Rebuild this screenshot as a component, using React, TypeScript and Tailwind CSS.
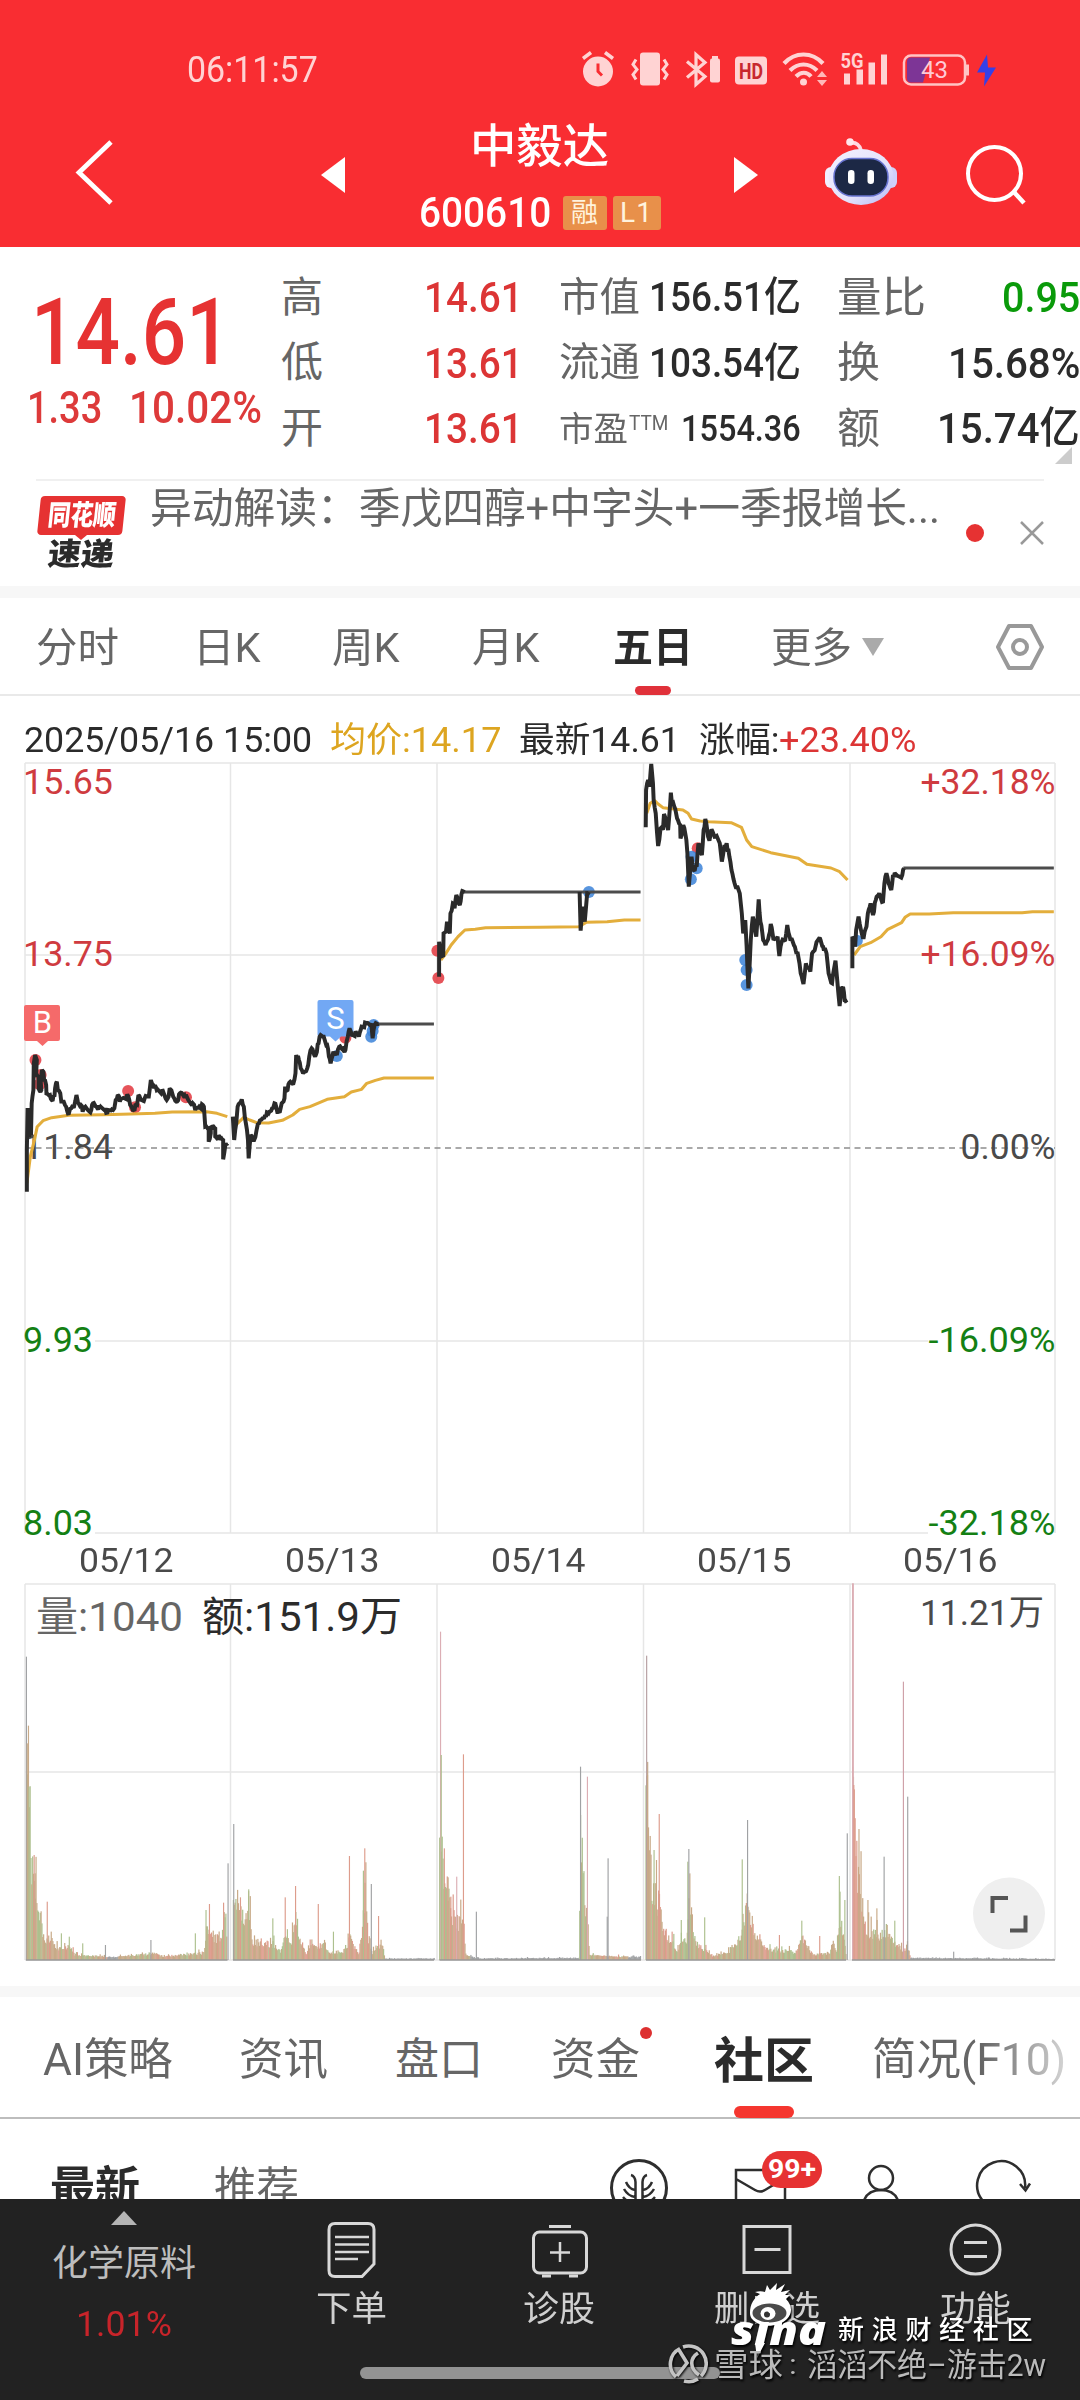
import React, { useLayoutEffect, useRef } from "react";

/* Text that is condensed or stretched to fill the width of its box. */
function Fit({ className = "", children }: { className?: string; children: React.ReactNode }) {
  const box = useRef<HTMLSpanElement>(null);
  const inner = useRef<HTMLSpanElement>(null);
  useLayoutEffect(() => {
    const fit = () => {
      if (!box.current || !inner.current) return;
      const natural = inner.current.offsetWidth;
      if (natural) inner.current.style.transform = `scaleX(${box.current.clientWidth / natural})`;
    };
    fit();
    document.fonts?.ready.then(fit);
  }, []);
  return (
    <span ref={box} className={"block shrink-0 whitespace-nowrap leading-none " + className}>
      <span ref={inner} className="inline-block origin-left">{children}</span>
    </span>
  );
}

/* ---------- header ---------- */

function StatusIcons() {
  return (
    <svg className="ml-[263px] h-[40px] w-[420px]" viewBox="582 48.500 420 40" fill="none">
      <g stroke="#ffd3d3" fill="#ffd3d3">
        <circle cx="599" cy="70" r="15" stroke="none" />
        <path d="M584 57l8-6M614 57l-8-6" strokeWidth="3.500" />
        <path d="M599 62v8l4 4" stroke="#f92d32" strokeWidth="3" fill="none" />
        <rect x="641" y="51" width="20" height="33" rx="3" stroke="none" />
        <path d="M637 58l-3 5 4 5-4 5 3 5M665 58l3 5-4 5 4 5-3 5" strokeWidth="3" fill="none" />
        <path d="M688 60l18 15-9 8V53l9 8-18 15" strokeWidth="3.200" fill="none" />
        <rect x="711" y="57" width="10" height="24" rx="2" stroke="none" />
        <rect x="713" y="54.500" width="6" height="3" stroke="none" />
        <rect x="736" y="55" width="32" height="28" rx="4" stroke="none" />
      </g>
      <text x="740" y="77.500" fontSize="22" fontWeight="700" fill="#c8282e" textLength="24" lengthAdjust="spacingAndGlyphs" fontFamily="Roboto">HD</text>
      <g stroke="#ffd3d3" strokeWidth="4.200" fill="none">
        <path d="M785 62c11-12 28-12 39 0M791 69c8-8 19-8 27 0M797 75c5-5 11-5 15 0" />
      </g>
      <circle cx="804.500" cy="80.500" r="3.500" fill="#ffd3d3" />
      <path d="M818 75.500l5-6 5 6zM818 78.500l5 6 5-6z" fill="#ffb9b9" />
      <text x="841.500" y="66.500" fontSize="20" fontWeight="700" fill="#ffd3d3" textLength="23" lengthAdjust="spacingAndGlyphs" fontFamily="Roboto">5G</text>
      <path d="M845 72h6v11h-6zM857.500 68h6.500v15h-6.500zM869.500 61h6.500v22h-6.500zM882 53h6v30h-6z" fill="#ffd3d3" />
      <path d="M912 56h19l-7 25h-12q-4 0-4-4V60q0-4 4-4z" fill="#7d3596" />
      <rect x="905" y="54" width="61" height="29" rx="7" stroke="#ffc4c4" strokeWidth="2.500" />
      <path d="M968.500 63v11" stroke="#ffc4c4" strokeWidth="3" />
      <text x="922" y="76.500" fontSize="23" fill="#ffc9d6" textLength="27" lengthAdjust="spacingAndGlyphs" fontFamily="Roboto">43</text>
      <path d="M988 53l-10 18h8l-1 14 12-19h-8z" fill="#3440e8" />
    </svg>
  );
}

function Robot() {
  return (
    <svg className="ml-[66px] h-[72px] w-[72px]" viewBox="825 135 72 72">
      <defs>
        <linearGradient id="shell" x1="0" y1="0" x2="1" y2="1">
          <stop offset="0" stopColor="#f3f0ff" />
          <stop offset=".6" stopColor="#e4e2fb" />
          <stop offset="1" stopColor="#b3b8f5" />
        </linearGradient>
      </defs>
      <path d="M849 143q9-2 12 7" fill="none" stroke="#ffd9e2" strokeWidth="3.500" />
      <circle cx="850" cy="142" r="3.800" fill="#ffe7ec" />
      <rect x="825" y="167" width="12" height="21" rx="6" fill="#f1efff" />
      <rect x="885" y="167" width="12" height="21" rx="6" fill="#cfd0fa" />
      <ellipse cx="861" cy="177" rx="32.500" ry="28" fill="url(#shell)" />
      <rect x="834" y="158.500" width="54" height="37.500" rx="18" fill="#1c2845" stroke="#6773d0" strokeWidth="1.500" />
      <rect x="848" y="170" width="6.500" height="14" rx="3.200" fill="#fff" />
      <rect x="867.500" y="170" width="6.500" height="14" rx="3.200" fill="#fff" />
    </svg>
  );
}

function Header() {
  return (
    <header className="h-[247px] bg-[#f92d32] text-white">
      <div className="flex h-[110px] items-center pt-[29px] pl-[187px]">
        <Fit className="w-[131px] text-[37px] text-[#ffd3d3]">06:11:57</Fit>
        <StatusIcons />
      </div>
      <div className="flex h-[137px] items-start">
        <svg className="mt-[30px] ml-[74px] h-[68px] w-[42px]" viewBox="74 141 42 68" fill="none" stroke="#fff" strokeWidth="4.800">
          <path d="M111 143L79 173.500 111 204" />
        </svg>
        <svg className="mt-[47px] ml-[205px] h-[36px] w-[24px]" viewBox="0 0 24 36"><path d="M24 0v36L0 18z" fill="#fff" /></svg>
        <div className="ml-[74px] flex w-[241px] flex-col items-center">
          <Fit className="mt-[13px] w-[139px] text-[46px] font-medium">中毅达</Fit>
          <div className="mt-[23px] flex items-center">
            <Fit className="w-[132px] text-[42px] font-medium">600610</Fit>
            <span className="ml-[12px] flex h-[34px] w-[44px] items-center justify-center rounded-[3px] bg-[#e8904a] text-[27px] leading-none text-[#fff3dd]">融</span>
            <span className="ml-[6px] flex h-[34px] w-[48px] items-center justify-center rounded-[3px] bg-[#e8904a] text-[28px] leading-none tracking-[1px] text-[#fff3dd]">L1</span>
          </div>
        </div>
        <svg className="mt-[47px] ml-[74px] h-[36px] w-[24px]" viewBox="0 0 24 36"><path d="M0 0v36l24-18z" fill="#fff" /></svg>
        <div className="mt-[25px] ml-px"><Robot /></div>
        <svg className="mt-[33px] ml-[67px] h-[64px] w-[64px]" viewBox="964 143 64 64" fill="none" stroke="#fff" strokeWidth="4">
          <circle cx="994.500" cy="173.500" r="26.500" />
          <path d="M1013 191l11 12" strokeWidth="4.500" />
        </svg>
      </div>
    </header>
  );
}

/* ---------- quote ---------- */

const label = "text-[42px] text-[#666]";
const dark = "text-[43px] font-medium text-[#2b2b2b]";

function Quote() {
  return (
    <section className="relative flex h-[232px]">
      <div className="w-[281px]">
        <Fit className="mt-[40px] ml-[31px] w-[200px] text-[92px] font-medium text-[#e63232]">14.61</Fit>
        <div className="mt-[6px] flex">
          <Fit className="ml-[27px] w-[75px] text-[45px] font-medium text-[#dd3a3a]">1.33</Fit>
          <Fit className="ml-[27px] w-[133px] text-[45px] font-medium text-[#dd3a3a]">10.02%</Fit>
        </div>
      </div>
      <div className="w-[278px] pt-[18px]">
        {[["高", "14.61"], ["低", "13.61"], ["开", "13.61"]].map(([k, v]) => (
          <div key={k} className="flex h-[65.5px] items-center">
            <Fit className={"w-[42px] " + label}>{k}</Fit>
            <Fit className="ml-[101px] w-[99px] text-[43px] font-medium text-[#dc3535]">{v}</Fit>
          </div>
        ))}
      </div>
      <div className="w-[278px] pt-[18px]">
        {[["市值", "156.51亿"], ["流通", "103.54亿"]].map(([k, v]) => (
          <div key={k} className="flex h-[65.5px] items-center">
            <Fit className="w-[81px] text-[40px] text-[#666]">{k}</Fit>
            <Fit className="ml-[9px] w-[152px] text-[41px] font-medium text-[#2b2b2b]">{v}</Fit>
          </div>
        ))}
        <div className="flex h-[65.5px] items-center">
          <Fit className="w-[69px] text-[34px] text-[#666]">市盈</Fit>
          <Fit className="mb-[12px] ml-[1px] w-[39px] text-[20px] text-[#666]">TTM</Fit>
          <Fit className="ml-[13px] w-[120px] text-[36px] font-medium text-[#2b2b2b]">1554.36</Fit>
        </div>
      </div>
      <div className="w-[243px] pt-[18px]">
        <div className="flex h-[65.5px] items-center justify-between">
          <Fit className={"w-[89px] " + label}>量比</Fit>
          <Fit className="w-[78px] text-[43px] font-medium text-[#0a9a0a]">0.95</Fit>
        </div>
        <div className="flex h-[65.5px] items-center justify-between">
          <Fit className={"w-[43px] " + label}>换</Fit>
          <Fit className={"w-[132px] " + dark}>15.68%</Fit>
        </div>
        <div className="flex h-[65.5px] items-center justify-between">
          <Fit className={"w-[43px] " + label}>额</Fit>
          <Fit className={"w-[143px] " + dark}>15.74亿</Fit>
        </div>
      </div>
      <svg className="absolute top-[200px] left-[1055px] h-[17px] w-[17px]" viewBox="0 0 17 17"><path d="M17 0v17H0z" fill="#ccc" /></svg>
    </section>
  );
}

function News() {
  return (
    <section className="mx-[36px] flex h-[107px] border-t-2 border-[#f0f0f0]">
      <div className="mt-[15px] flex h-[76px] w-[90px] flex-col items-center">
        <div className="flex h-[39px] w-[85px] -skew-x-6 items-center justify-center rounded-[4px] bg-[#e63232]">
          <Fit className="w-[68px] text-[28px] font-black text-white">同花顺</Fit>
        </div>
        <svg className="h-[5px] w-[12px]" viewBox="0 0 12 5"><path d="M0 0h12L6 5z" fill="#e63232" /></svg>
        <div className="-skew-x-6"><Fit className="mt-[-1px] w-[66px] text-[31px] font-black text-[#2b2b2b]">速递</Fit></div>
      </div>
      <Fit className="mt-[7px] ml-[24px] w-[790px] text-[42px] text-[#666]">异动解读：季戊四醇+中字头+一季报增长...</Fit>
      <span className="mt-[43px] ml-[26px] h-[18px] w-[18px] shrink-0 rounded-full bg-[#e63232]" />
      <svg className="mt-[40px] ml-[36px] h-[24px] w-[24px] shrink-0" viewBox="0 0 24 24" stroke="#999" strokeWidth="2.500"><path d="M1 1l22 22M23 1L1 23" /></svg>
    </section>
  );
}

function PeriodTabs() {
  return (
    <nav className="flex h-[98px] items-start border-b-2 border-[#e9e9e9] pt-[30px] text-[41px] text-[#666]">
      <Fit className="ml-[36px] w-[83px]">分时</Fit>
      <Fit className="ml-[74px] w-[68px]">日K</Fit>
      <Fit className="ml-[71px] w-[68px]">周K</Fit>
      <Fit className="ml-[72px] w-[68px]">月K</Fit>
      <div className="ml-[73px] flex w-[80px] flex-col items-center">
        <Fit className="w-[80px] font-bold text-[#2b2b2b]">五日</Fit>
        <span className="mt-[17px] h-[9px] w-[36px] rounded-full bg-[#e0313a]" />
      </div>
      <Fit className="ml-[78px] w-[81px]">更多</Fit>
      <svg className="mt-[10px] ml-[9px] h-[18px] w-[24px]" viewBox="0 0 24 18"><path d="M1 0h22L12 18z" fill="#aaa" /></svg>
      <svg className="mt-[-6px] ml-[108px] h-[50px] w-[56px]" viewBox="0 0 56 50" fill="none" stroke="#999" strokeWidth="4" strokeLinejoin="round">
        <path d="M16 4h22L49 25 38 46H16L5 25z" />
        <circle cx="27" cy="25" r="7" />
      </svg>
    </nav>
  );
}

/* ---------- price chart ---------- */

const gridX = [25, 230.5, 437, 643.5, 850, 1055];

/* One polyline per trading day. */
const pricePaths = [
  "78,1355 78,1230 80,1110 83,1110 84,1190 90,1185 92,1090 97,1050 98,970 102,945 107,960 105,1000 112,1010 112,1045 120,1050 118,1020 122,990 126,995 128,1020 134,1035 135,1065 145,1065 150,1080 158,1070 160,1045 165,1025 168,1050 175,1060 178,1085 185,1085 192,1100 200,1120 207,1105 215,1100 222,1065 226,1085 235,1095 240,1115 248,1100 255,1110 265,1110 270,1090 280,1100 290,1105 305,1105 312,1118 325,1108 332,1105 336,1080 342,1065 348,1085 356,1075 372,1068 378,1095 388,1110 398,1095 402,1065 410,1080 420,1075 432,1070 438,1020 445,1035 455,1050 470,1053 484,1080 495,1048 503,1070 512,1085 525,1058 535,1065 550,1085 560,1090 567,1110 578,1100 592,1100 596,1160 606,1165 606,1205 612,1180 612,1160 625,1165 625,1190 640,1195 648,1200 648,1258 655,1210 660,1210",
  "676,1130 680,1200 686,1150 690,1100 702,1078 708,1100 714,1150 720,1200 722,1255 728,1185 738,1200 745,1170 752,1150 762,1135 770,1125 780,1120 790,1105 797,1090 805,1115 812,1118 818,1090 826,1075 828,1040 835,1050 840,1028 852,1030 858,1000 860,945 868,960 873,985 880,1000 892,985 898,950 905,925 915,950 925,910 928,890 940,890 950,915 955,950 960,970 968,935 978,945 985,920 995,925 1003,930 1010,890 1015,865 1022,885 1035,880 1042,890 1050,860 1065,850 1078,850 1082,895 1088,855 1100,852",
  "1275,710 1275,605 1280,650 1287,650 1288,580 1295,575 1298,545 1306,580 1308,520 1315,490 1320,505 1325,465 1335,495 1340,462 1350,456",
  "1683,456 1686,572 1692,500 1698,545 1705,460 1710,456",
  "1875,262 1876,150 1882,120 1886,140 1891,72 1896,130 1898,180 1904,220 1911,318 1918,265 1925,270 1928,222 1940,270 1948,158 1951,190 1958,200 1966,235 1975,255 1976,295 1984,255 1993,300 1996,340 2000,440 2008,350 2014,390 2023,380 2028,310 2038,345 2043,270 2048,237 2056,290 2060,302 2066,268 2078,290 2090,310 2096,365 2103,320 2110,310 2118,350 2124,390 2133,430 2148,460 2154,520 2158,580 2164,540 2168,620 2173,745 2180,600 2186,530 2196,590 2203,478 2208,545 2216,600 2223,615 2233,585 2238,552 2246,600 2258,590 2263,648 2270,605 2280,600 2286,555 2293,590 2308,620 2318,650 2325,700 2333,732 2340,670 2353,695 2358,640 2368,620 2380,593 2390,620 2400,640 2406,700 2416,730 2426,662 2431,720 2438,798 2443,740 2448,740 2453,785 2458,788",
  "2475,685 2475,590 2483,620 2486,570 2493,530 2500,570 2508,592 2516,560 2520,520 2528,490 2535,525 2543,480 2553,460 2564,485 2568,430 2574,400 2580,430 2588,450 2593,405 2608,408 2620,405 2625,385",
];

/* Intraday ticks: adds small oscillation between the turning points. */
function jagged(points: string) {
  const p = points.split(" ").map((s) => s.split(",").map(Number));
  const out: string[] = [];
  let k = 0;
  p.forEach(([x, y], i) => {
    out.push(`${x},${y}`);
    const n = p[i + 1];
    if (!n) return;
    const steps = Math.floor((n[0] - x) / 2.5);
    for (let s = 1; s < steps; s++) {
      k++;
      const d = (((k * 7919) % 13) - 6) * 1.2;
      out.push(`${x + ((n[0] - x) * s) / steps},${y + ((n[1] - y) * s) / steps + d}`);
    }
  });
  return out.join(" ");
}

const averagePaths = [
  "78,1330 88,1250 100,1200 108,1160 125,1142 150,1133 200,1126 300,1124 380,1122 450,1120 500,1116 600,1115 630,1120 660,1130",
  "680,1160 695,1145 708,1132 725,1140 745,1148 780,1149 820,1141 850,1125 870,1108 900,1100 950,1078 1000,1070 1020,1056 1050,1048 1065,1030 1090,1021 1115,1014 1260,1014",
  "1280,660 1295,640 1310,615 1330,590 1350,570 1380,568 1410,563 1568,562 1681,560 1703,547 1763,545 1813,540 1860,540",
  "1878,220 1888,190 1901,182 1911,192 1925,203 1983,210 1998,220 2008,237 2033,243 2058,245 2123,248 2153,262 2168,300 2183,320 2238,338 2318,355 2343,373 2413,384 2438,395 2461,420",
  "2480,645 2498,620 2528,608 2558,590 2578,568 2618,548 2628,532 2643,522 2698,522 2768,518 2968,518 2998,515 3060,515",
];

const buys = [[103, 960], [118, 1005], [115, 1033], [372, 1053], [392, 1102], [540, 1072], [1003, 893], [1270, 632], [1273, 714], [2026, 325]];
const sells = [[978, 948], [1085, 855], [1078, 890], [1082, 873], [1710, 456], [2023, 385], [2006, 418], [2008, 350], [2164, 660], [2168, 690], [2168, 735], [2488, 602]];

const pctLabels = [
  { y: 794, l: "15.65", r: "+32.18%", c: "#cf3b40", lw: 89, rw: 135 },
  { y: 966, l: "13.75", r: "+16.09%", c: "#cf3b40", lw: 89, rw: 135 },
  { y: 1159, l: "11.84", r: "0.00%", c: "#4a4a4a", lw: 89, rw: 95 },
  { y: 1352, l: "9.93", r: "-16.09%", c: "#148014", lw: 69, rw: 127 },
  { y: 1535, l: "8.03", r: "-32.18%", c: "#148014", lw: 69, rw: 127 },
];

function PriceChart() {
  const sx = 1 / 2.9037;
  return (
    <svg className="block h-[776px] w-[1080px] shrink-0 overflow-visible" viewBox="0 762 1080 776" fontFamily="Roboto, 'Noto Sans CJK SC', sans-serif">
      <g stroke="#e6e6e6" strokeWidth="1.500">
        {gridX.map((x) => <path key={x} d={`M${x} 763V1533`} />)}
        <path d="M25 763H1055M25 955H1055M95 1341H928M95 1533H928" />
      </g>
      <path d="M25 1148H1055" stroke="#8d8d8d" strokeWidth="1.600" strokeDasharray="6 4.500" />
      {pctLabels.map((p) => (
        <g key={p.y} fill={p.c} fontSize="34.500">
          <text x="23" y={p.y} textLength={p.lw + 1} lengthAdjust="spacingAndGlyphs">{p.l}</text>
          <text x={1055.5 - p.rw} y={p.y} textLength={p.rw} lengthAdjust="spacingAndGlyphs">{p.r}</text>
        </g>
      ))}
      <g fill="#e2363d" fillOpacity=".85">{buys.map(([x, y], i) => <circle key={i} cx={x * sx} cy={740 + y / 3} r="6" />)}</g>
      <g fill="#3b82d8" fillOpacity=".85">{sells.map(([x, y], i) => <circle key={i} cx={x * sx} cy={740 + y / 3} r="6" />)}</g>
      <path d="M26 1005h32q2 0 2 2v32q0 2-2 2H48l-5.500 5-5.500-5H26q-2 0-2-2v-32q0-2 2-2z" fill="#f56a6a" />
      <text x="42.500" y="1033" fontSize="31" fill="#fff" textAnchor="middle">B</text>
      <path d="M319.500 1000h32q2 0 2 2v32.500q0 2-2 2H341l-5.500 5-5.500-5h-10.500q-2 0-2-2V1002q0-2 2-2z" fill="#72a8f4" />
      <text x="335.500" y="1028.500" fontSize="31" fill="#fff" textAnchor="middle">S</text>
      <g transform={`translate(0 740) scale(${sx} ${1 / 3})`} fill="none" strokeLinejoin="round">
        <g stroke="#e3ae3c" strokeWidth="9">{averagePaths.map((p) => <polyline key={p} points={p} />)}</g>
        <g stroke="#4c4c4c" strokeWidth="9.500"><path d="M1098 852H1260M1348 456H1860M2623 384H3060" /></g>
        <g stroke="#2a2a2a" strokeWidth="11.500" strokeLinejoin="miter" strokeMiterlimit="2">{pricePaths.map((p) => <polyline key={p} points={jagged(p)} />)}</g>
      </g>
    </svg>
  );
}

/* ---------- volume chart ---------- */

const RED = "#dd9c8c", GREEN = "#adc08e", TAN = "#c8aa88", GRAY = "#a0a2a4", PINK = "#dcaeb4";

const envelopes: number[][][] = [
  [[76, 650], [84, 480], [90, 270], [98, 230], [104, 160], [115, 140], [122, 60], [150, 55], [170, 30], [200, 40], [215, 15], [250, 12], [330, 8], [440, 18], [470, 10], [592, 20], [600, 90], [615, 60], [640, 60], [648, 120], [655, 120], [658, 3]],
  [[676, 190], [690, 170], [705, 120], [722, 150], [730, 50], [760, 50], [800, 40], [815, 25], [830, 80], [845, 50], [858, 140], [865, 70], [880, 45], [887, 15], [905, 50], [925, 40], [940, 40], [960, 20], [1000, 25], [1015, 60], [1040, 15], [1050, 80], [1060, 200], [1068, 50], [1080, 20], [1090, 40], [1112, 35], [1116, 4], [1260, 4]],
  [[1275, 320], [1285, 280], [1300, 190], [1315, 110], [1325, 110], [1347, 95], [1350, 12], [1390, 4], [1680, 6], [1684, 350], [1690, 300], [1697, 170], [1706, 120], [1709, 12], [1860, 8]],
  [[1874, 420], [1880, 480], [1886, 300], [1893, 190], [1903, 150], [1913, 200], [1920, 110], [1943, 50], [1953, 60], [1960, 25], [1978, 50], [1993, 60], [2000, 230], [2005, 130], [2018, 50], [2043, 30], [2068, 12], [2113, 20], [2133, 50], [2148, 60], [2168, 160], [2180, 90], [2203, 50], [2228, 30], [2308, 22], [2328, 70], [2343, 40], [2358, 15], [2408, 20], [2418, 50], [2428, 20], [2438, 130], [2448, 60], [2455, 20]],
  [[2474, 480], [2480, 420], [2486, 240], [2498, 190], [2506, 100], [2528, 75], [2568, 70], [2573, 90], [2598, 50], [2623, 25], [2634, 35], [2643, 6], [3060, 3]],
];

const spikes: [number, number, string][] = [
  [76.5, 910, GRAY], [79, 650, TAN], [84, 520, GREEN], [99, 315, RED], [102, 260, TAN], [137, 175, RED], [178, 80, GREEN], [201, 70, GREEN], [240, 50, GREEN], [306, 45, GRAY], [438, 60, GRAY], [567, 80, GREEN], [598, 150, GREEN], [608, 168, RED], [649, 172, RED], [662, 290, GRAY],
  [678.5, 408, GRAY], [698, 188, RED], [722, 212, GREEN], [792, 125, GREEN], [828, 188, RED], [858, 222, RED], [924, 168, RED], [968, 85, GREEN], [1014.5, 312, RED], [1055, 268, GREEN], [1059, 335, RED], [1078, 228, GRAY], [1099, 132, RED],
  [1279, 985, PINK], [1281, 615, GREEN], [1290, 335, RED], [1301, 248, TAN], [1309, 190, RED], [1326, 250, PINK], [1345.5, 617, RED], [1383, 145, GRAY], [1685.5, 580, GRAY], [1705.5, 550, PINK], [1763, 130, GRAY], [1765.5, 305, GRAY],
  [1877.5, 913, "#b59da0"], [1880, 555, TAN], [1899, 330, GREEN], [1906, 300, TAN], [1914, 438, RED], [1978, 120, GREEN], [1997, 295, GREEN], [2000, 333, GRAY], [2046, 128, GREEN], [2155, 302, GREEN], [2170.5, 420, GRAY], [2263, 75, RED], [2328, 118, GREEN], [2380, 72, RED], [2437, 252, GREEN], [2453, 180, GREEN], [2460, 380, GRAY],
  [2475.5, 1130, PINK], [2477.5, 1130, PINK], [2479, 525, RED], [2494, 393, TAN], [2520, 180, TAN], [2546, 155, TAN], [2567, 310, GRAY], [2598, 118, GREEN], [2623, 835, "#cfa0a8"], [2635.5, 490, GRAY], [2769, 25, GRAY],
];

function volumeBars() {
  const bars: { x: number; h: number; c: string }[] = [];
  let seed = 42;
  const rnd = () => ((seed = (seed * 16807) % 2147483647) / 2147483647);
  envelopes.forEach((env) => {
    let i = 0;
    for (let x = env[0][0]; x < env[env.length - 1][0]; x += 2.45) {
      while (i < env.length - 2 && env[i + 1][0] < x) i++;
      const [x0, h0] = env[i], [x1, h1] = env[i + 1];
      const e = h0 + ((h1 - h0) * (x - x0)) / (x1 - x0);
      const h = Math.max(3, e * (0.8 + rnd() * 0.5 + (rnd() > 0.88 ? 0.5 : 0)));
      const m = Math.sin(x / 23) * 0.25 + rnd();
      bars.push({ x, h, c: e < 9 ? GRAY : m < 0.22 ? GREEN : m > 0.88 ? RED : TAN });
    }
  });
  return bars;
}

function VolumeChart() {
  const s = 1 / 2.9037;
  return (
    <svg className="block h-[380px] w-[1080px] shrink-0" viewBox="0 1582 1080 380" fontFamily="Roboto, 'Noto Sans CJK SC', sans-serif">
      <g stroke="#e6e6e6" strokeWidth="1.500">
        {gridX.map((x) => <path key={x} d={`M${x} 1584V1960`} />)}
        {[1584, 1772, 1960].map((y) => <path key={y} d={`M25 ${y}H1055`} />)}
      </g>
      {volumeBars().map((b, i) => <rect key={i} x={b.x * s} y={1960 - b.h / 3} width="1.200" height={b.h / 3} fill={b.c} />)}
      {spikes.map(([x, h, c], i) => <rect key={i} x={x * s - 0.5} y={1960 - h / 3} width="1.150" height={h / 3} fill={c} />)}
      <path d="M26 1960H227.500M233 1960H434M439.500 1960H641M646 1960H846M852 1960H1055" stroke="#999" strokeWidth="1.500" />
      <text x="36" y="1630.500" fontSize="41" fill="#666" textLength="147" lengthAdjust="spacingAndGlyphs">量:1040</text>
      <text x="202" y="1630.500" fontSize="41" fill="#2b2b2b" textLength="200" lengthAdjust="spacingAndGlyphs">额:151.9万</text>
      <text x="920" y="1624.500" fontSize="35" fill="#4a4a4a" textLength="124" lengthAdjust="spacingAndGlyphs">11.21万</text>
      <circle cx="1009" cy="1913.500" r="36" fill="#efefef" />
      <path d="M992.500 1913v-15h15.500M1010 1930.500h15.500v-15" fill="none" stroke="#555" strokeWidth="4" />
    </svg>
  );
}

function Charts() {
  return (
    <section className="flex h-[1290px] flex-col">
      <div className="flex h-[66px] shrink-0 items-start pt-[27px] text-[35px] text-[#2b2b2b]">
        <Fit className="ml-[24px] w-[288px]">2025/05/16 15:00</Fit>
        <Fit className="ml-[18px] w-[171px] text-[#dda520]">均价:14.17</Fit>
        <Fit className="ml-[18px] w-[161px]">最新14.61</Fit>
        <Fit className="ml-[19px] w-[80px]">涨幅:</Fit>
        <Fit className="w-[137px] text-[#dc3535]">+23.40%</Fit>
      </div>
      <PriceChart />
      <div className="grid h-[44px] shrink-0 grid-cols-5 pt-[5px] pr-[27px] pl-[23px] text-[34px] text-[#4a4a4a]">
        {["05/12", "05/13", "05/14", "05/15", "05/16"].map((d) => (
          <div key={d} className="flex justify-center"><Fit className="w-[94px]">{d}</Fit></div>
        ))}
      </div>
      <VolumeChart />
    </section>
  );
}

/* ---------- community ---------- */

function SectionTabs() {
  return (
    <nav className="flex h-[122px] items-start border-b-2 border-[#bdbdbd] pt-[41px] text-[44px] text-[#666]">
      <Fit className="ml-[43px] w-[130px]">AI策略</Fit>
      <Fit className="ml-[66px] w-[89px]">资讯</Fit>
      <Fit className="ml-[67px] w-[88px]">盘口</Fit>
      <div className="relative ml-[68px]">
        <Fit className="w-[89px]">资金</Fit>
        <span className="absolute -top-[11px] left-[89px] h-[12px] w-[12px] rounded-full bg-[#dd3030]" />
      </div>
      <div className="ml-[74px] flex w-[100px] flex-col items-center">
        <Fit className="mt-[-1px] w-[100px] text-[49px] font-bold text-[#2b2b2b]">社区</Fit>
        <span className="mt-[20px] h-[12px] w-[60px] rounded-full bg-[#f5362f]" />
      </div>
      <div className="relative ml-[58px]">
        <Fit className="w-[194px]">简况(F10)</Fit>
        <span className="absolute -top-1 left-[110px] h-[56px] w-[98px] bg-linear-to-r from-white/0 to-white/85" />
      </div>
    </nav>
  );
}

function Community() {
  return (
    <section className="flex h-[80px] items-start overflow-hidden">
      <Fit className="mt-[47px] ml-[50px] w-[90px] text-[44px] font-bold text-[#2b2b2b]">最新</Fit>
      <Fit className="mt-[48px] ml-[74px] w-[85px] text-[42px] text-[#666]">推荐</Fit>
      <svg className="ml-[301px] h-[80px] w-[480px]" viewBox="600 2119 480 80" fill="none" stroke="#2e2e2e" strokeWidth="2.500">
        <circle cx="639" cy="2188" r="27.500" strokeWidth="3" />
        <path d="M635.500 2210V2182Q635 2176 631 2175M642.500 2210V2182Q643 2176 647 2175M635 2190Q629 2189 626 2182M635 2197Q628 2196 624 2189M635 2204Q628 2203 623 2197M643 2190Q649 2189 652 2182M643 2197Q650 2196 654 2189M643 2204Q650 2203 655 2197" />
        <path d="M736 2200V2170h49v30M736 2179l19 11q5 3 10 0l20-12" />
        <rect x="762" y="2151" width="60" height="37" rx="18.500" fill="#e63232" stroke="none" />
        <circle cx="881" cy="2178" r="12" />
        <path d="M863 2204q3-14 18-14t18 14" />
        <path d="M984 2202A24 24 0 1 1 1025 2188M1020 2184l5.500 6.500 4.500-7" />
        <text x="768" y="2178" fontSize="25" fontWeight="700" fill="#fff" stroke="none" textLength="48" lengthAdjust="spacingAndGlyphs" fontFamily="Roboto">99+</text>
      </svg>
    </section>
  );
}

/* ---------- bottom bar ---------- */

function NavItem({ icon, text, w }: { icon: React.ReactNode; text: string; w: string }) {
  return (
    <div className="flex w-[208px] flex-col items-center">
      <svg className="mt-[20px] h-[62px] w-[62px]" viewBox="0 0 62 62" fill="none" stroke="#d8d8d8" strokeWidth="3">{icon}</svg>
      <Fit className={"mt-[11px] -ml-[2px] text-[35px] text-[#d0d0d0] " + w}>{text}</Fit>
    </div>
  );
}

function BottomBar() {
  return (
    <footer className="relative flex h-[201px] bg-[#222]">
      <div className="flex w-[248px] flex-col items-center">
        <svg className="mt-[12px] h-[14px] w-[26px]" viewBox="0 0 26 14"><path d="M13 0l13 14H0z" fill="#b5b5b5" /></svg>
        <Fit className="mt-[21px] w-[144px] text-[36px] text-[#bdbdbd]">化学原料</Fit>
        <Fit className="mt-[25px] w-[96px] text-[35px] text-[#c8242a]">1.01%</Fit>
      </div>
      <NavItem
        text="下单"
        w="w-[71px]"
        icon={<><path d="M14 4.500h33q6 0 6 6V45L41 57.500H14q-6 0-6-6v-41q0-6 6-6z" /><path d="M14 18h34M14 25.500h34M14 33h34M14 40h23" strokeWidth="2.500" /></>}
      />
      <NavItem
        text="诊股"
        w="w-[72px]"
        icon={<><path d="M20 7.500h22" /><rect x="4.500" y="13" width="53" height="41" rx="6" /><path d="M31 23v20M21 33.500h20" strokeWidth="2.500" /><path d="M13 57h9M40 57h9" /></>}
      />
      <NavItem
        text="删自选"
        w="w-[106px]"
        icon={<><rect x="7" y="7.500" width="46" height="46" /><path d="M17.500 30.500h26" /></>}
      />
      <NavItem
        text="功能"
        w="w-[71px]"
        icon={<><circle cx="30.500" cy="30.500" r="24.500" /><path d="M19 23.500h23M19 37.500h23" /></>}
      />
      <span className="absolute top-[168px] left-[360px] h-[12px] w-[360px] rounded-full bg-[#939393]" />
      <div className="absolute top-[84px] left-[660px] h-[117px] w-[400px]">
        <svg className="absolute top-0 left-[60px] h-[80px] w-[120px] drop-shadow-[1px_2px_1px_#000]" viewBox="720 2283 120 80">
          <path d="M750 2313c0-9 4-15 10-19l-5-2c4-1 7-1 10 0l2-7 3 5 7-7-1 7 9-6-4 8 9-2-5 5 5 0-4 4c6 6 7 14 1 20-7 7-22 9-30 4-5-3-7-6-7-10z" fill="#fff" />
          <ellipse cx="769.500" cy="2313" rx="17" ry="9.500" fill="#4a4a4a" />
          <ellipse cx="768" cy="2313.500" rx="7.500" ry="6.500" fill="#fff" />
          <circle cx="767" cy="2314.500" r="3" fill="#333" />
          <circle cx="770" cy="2311.500" r="1.600" fill="#fff" />
          <text x="731" y="2345" fontSize="41" fontWeight="800" fontStyle="italic" fill="#fff" textLength="95" lengthAdjust="spacingAndGlyphs" fontFamily="'Open Sans', sans-serif">sına</text>
          <path d="M755 2343h10l-8 15z" fill="#fff" />
        </svg>
        <span className="absolute top-[34px] left-[178px] text-[26px] leading-none font-medium tracking-[7.700px] whitespace-nowrap text-white drop-shadow-[1px_2px_1px_#000]">新浪财经社区</span>
        <svg className="absolute top-[61px] left-[8px] h-[40px] w-[40px] drop-shadow-[1px_1px_1px_#000]" viewBox="0 0 40 40" fill="none" stroke="#c4c4c4" strokeWidth="3.600">
          <path d="M8 33A17.500 17.500 0 0 1 12 4.500M15 3A17.500 17.500 0 0 1 33 32M30 35A17.500 17.500 0 0 1 16 37" />
          <path d="M11 6l8 13-10 13M30 9c-8 5-9 15 1 22" />
        </svg>
        <div className="absolute top-[66px] left-[54px] flex items-center text-[32px] text-[#bababa] drop-shadow-[1px_2px_1px_#000]">
          <Fit className="w-[69px]">雪球</Fit>
          <Fit className="ml-[6px] w-[8px] text-[28px]">:</Fit>
          <Fit className="ml-[10px] w-[239px]">滔滔不绝–游击2w</Fit>
        </div>
      </div>
    </footer>
  );
}

export default function App() {
  return (
    <main className="flex h-[2400px] w-[1080px] flex-col overflow-hidden bg-white font-[Roboto,'Noto_Sans_CJK_SC',sans-serif]">
      <Header />
      <Quote />
      <News />
      <div className="h-[12px] shrink-0 bg-[#f7f7f7]" />
      <PeriodTabs />
      <Charts />
      <div className="h-[11px] shrink-0 bg-[#f7f7f7]" />
      <SectionTabs />
      <Community />
      <BottomBar />
    </main>
  );
}
